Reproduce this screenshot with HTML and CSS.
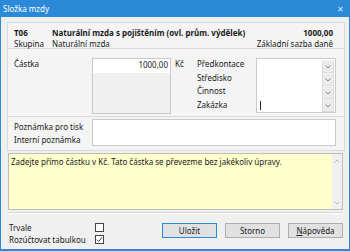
FILE: index.html
```html
<!DOCTYPE html>
<html lang="cs">
<head>
    <meta charset="UTF-8">
    <title>Složka mzdy</title>
    <link rel="stylesheet" href="styles.css">
</head>
<body>
    <div class="window">
        <div class="titlebar">
            <span class="title">Složka mzdy</span>
            <span class="close">✕</span>
        </div>

        <div class="client">
            <div class="panel">
                <!-- hlavička složky -->
                <div class="section head">
                    <div class="head-row">
                        <span class="code bold">T06</span>
                        <span class="name bold">Naturální mzda s pojištěním (ovl. prům. výdělek)</span>
                        <span class="value bold">1000,00</span>
                    </div>
                    <div class="head-row">
                        <span class="code">Skupina</span>
                        <span class="name">Naturální mzda</span>
                        <span class="value">Základní sazba daně</span>
                    </div>
                </div>

                <div class="section amount">
                    <div class="label">Částka</div>
                    <div class="amount-box">
                        <div class="amount-value">1000,00</div>
                    </div>
                    <div class="unit">Kč</div>
                    <div class="side-labels">
                        <div>Předkontace</div>
                        <div>Středisko</div>
                        <div>Činnost</div>
                        <div>Zakázka</div>
                    </div>
                    <div class="combo">
                        <div class="combo-fields">
                            <div></div>
                            <div></div>
                            <div></div>
                            <div><span class="caret"></span></div>
                        </div>
                        <div class="combo-buttons">
                            <div class="drop"><svg width="6" height="4" viewBox="0 0 6 4"><polyline points="0.5,0.5 3,3 5.5,0.5" fill="none" stroke="#7a7a7a" stroke-width="0.9"/></svg></div>
                            <div class="drop"><svg width="6" height="4" viewBox="0 0 6 4"><polyline points="0.5,0.5 3,3 5.5,0.5" fill="none" stroke="#7a7a7a" stroke-width="0.9"/></svg></div>
                            <div class="drop"><svg width="6" height="4" viewBox="0 0 6 4"><polyline points="0.5,0.5 3,3 5.5,0.5" fill="none" stroke="#7a7a7a" stroke-width="0.9"/></svg></div>
                            <div class="drop"><svg width="6" height="4" viewBox="0 0 6 4"><polyline points="0.5,0.5 3,3 5.5,0.5" fill="none" stroke="#7a7a7a" stroke-width="0.9"/></svg></div>
                        </div>
                    </div>
                </div>

                <div class="section notes">
                    <div class="note-labels">
                        <div>Poznámka pro tisk</div>
                        <div>Interní poznámka</div>
                    </div>
                    <div class="note-box"></div>
                </div>
            </div>

            <div class="memo">
                <div class="memo-text">Zadejte přímo částku v Kč. Tato částka se převezme bez jakékoliv úpravy.</div>
                <div class="scroll">
                    <svg width="6" height="4" viewBox="0 0 6 4"><polyline points="0.5,3.5 3,1 5.5,3.5" fill="none" stroke="#b5b5b5" stroke-width="0.9"/></svg>
                    <svg width="6" height="4" viewBox="0 0 6 4"><polyline points="0.5,0.5 3,3 5.5,0.5" fill="none" stroke="#b5b5b5" stroke-width="0.9"/></svg>
                </div>
            </div>

            <div class="separator"></div>

            <div class="footer">
                <div class="checks">
                    <div class="check-row">
                        <span class="check-label">Trvale</span>
                        <span class="checkbox"></span>
                    </div>
                    <div class="check-row">
                        <span class="check-label">Rozúčtovat tabulkou</span>
                        <span class="checkbox"><svg width="7" height="7" viewBox="0 0 7 7"><polyline points="0.8,3.6 2.7,5.5 6.2,1.2" fill="none" stroke="#333" stroke-width="0.9"/></svg></span>
                    </div>
                </div>
                <div class="buttons">
                    <button class="btn default">Uložit</button>
                    <button class="btn">Storno</button>
                    <button class="btn"><u>N</u>ápověda</button>
                </div>
            </div>
        </div>
    </div>
</body>
</html>
```

FILE: styles.css
```css
body {
    margin: 0;
    font-family: "Noto Sans", "Open Sans", sans-serif;
    font-size: 8px;
    color: #1a1a1a;
    background-color: #ffffff;
}
.window {
    width: 350px;
    height: 251px;
    box-sizing: border-box;
    border: 1px solid #2b8ad8;
    border-top: none;
    border-bottom-width: 2px;
    background-color: #f0f0f0;
    display: flex;
    flex-direction: column;
}
.titlebar {
    height: 17px;
    margin: 0 -1px;
    background-color: #2b8ad8;
    color: white;
    display: flex;
    align-items: center;
    justify-content: space-between;
    padding: 0 6px 0 3px;
}
.title {
    font-size: 8px;
}
.close {
    font-size: 8px;
    color: #d6e9f8;
}
.client {
    flex: 1;
    padding: 5px 4px 0 6px;
    display: flex;
    flex-direction: column;
}
.bold {
    font-weight: bold;
}
.panel {
    border: 1px solid #dadada;
    background-color: #f4f4f4;
}
.section + .section {
    border-top: 1px solid #dadada;
}
.head {
    height: 25px;
    padding: 4px 11px 0 6px;
    box-sizing: border-box;
}
.head-row {
    display: flex;
    height: 11px;
    line-height: 11px;
}
.code {
    width: 38px;
}
.name {
    flex: 1;
}
.amount {
    height: 68px;
    box-sizing: border-box;
    padding: 9px 0 0 6px;
    display: flex;
    align-items: flex-start;
}
.label {
    width: 78px;
    line-height: 12px;
}
.amount-box {
    width: 79px;
    height: 56px;
    box-sizing: border-box;
    border: 1px solid #cacaca;
    background-color: #f0f0f0;
}
.amount-value {
    height: 14px;
    line-height: 12px;
    background-color: white;
    text-align: right;
    padding-right: 2px;
}
.unit {
    width: 26px;
    padding-left: 4px;
    box-sizing: border-box;
    line-height: 12px;
}
.side-labels {
    width: 59px;
    margin-top: -1px;
}
.side-labels div {
    height: 13.5px;
    line-height: 13px;
}
.combo {
    width: 80px;
    height: 55px;
    box-sizing: border-box;
    border: 1px solid #cacaca;
    background-color: white;
    display: flex;
    padding: 1px 1px 1px 2px;
}
.combo-fields {
    flex: 1;
}
.combo-fields div {
    height: 13px;
    position: relative;
}
.caret {
    position: absolute;
    left: 1px;
    top: 2px;
    width: 1px;
    height: 9px;
    background-color: #222;
}
.combo-buttons {
    width: 12px;
}
.drop {
    height: 13px;
    box-sizing: border-box;
    border: 1px solid #dcdcdc;
    border-top-color: #f4f4f4;
    background-color: #ececec;
    display: flex;
    align-items: center;
    justify-content: center;
}
.notes {
    height: 34px;
    box-sizing: border-box;
    padding: 2px 0 0 6px;
    display: flex;
}
.note-labels {
    width: 78px;
    padding-top: 1px;
}
.note-labels div {
    height: 13px;
    line-height: 13px;
}
.note-box {
    width: 244px;
    height: 27px;
    box-sizing: border-box;
    border: 1px solid #cacaca;
    background-color: white;
}
.memo {
    height: 57px;
    margin: 2px 2px 0 1px;
    box-sizing: border-box;
    border: 1px solid #bdbdbd;
    background-color: #ffffcc;
    display: flex;
}
.memo-text {
    flex: 1;
    padding: 2px 2px;
    line-height: 11px;
}
.scroll {
    width: 10px;
    background-color: #f0f0f0;
    display: flex;
    flex-direction: column;
    justify-content: space-between;
    align-items: center;
    padding: 5px 0 4px;
}
.separator {
    height: 1px;
    margin: 2px 2px 0 0;
    background-color: #d5d5d5;
    border-bottom: 1px solid #ffffff;
}
.footer {
    display: flex;
    justify-content: space-between;
    padding: 5px 2px 0 2px;
}
.checks {
    padding-top: 2px;
}
.check-row {
    display: flex;
    align-items: center;
    height: 12px;
}
.check-label {
    width: 86px;
}
.checkbox {
    width: 9px;
    height: 9px;
    box-sizing: border-box;
    border: 1px solid #444;
    background-color: white;
    display: flex;
    align-items: center;
    justify-content: center;
}
.buttons {
    display: flex;
    gap: 8px;
    padding-top: 4px;
}
.btn {
    width: 55px;
    height: 15px;
    padding: 0;
    font-family: "Noto Sans", "Open Sans", sans-serif;
    font-size: 8px;
    color: #1a1a1a;
    background-color: #e1e1e1;
    border: 1px solid #adadad;
    border-radius: 0;
}
.btn.default {
    border-color: #2b8ad8;
}
```
